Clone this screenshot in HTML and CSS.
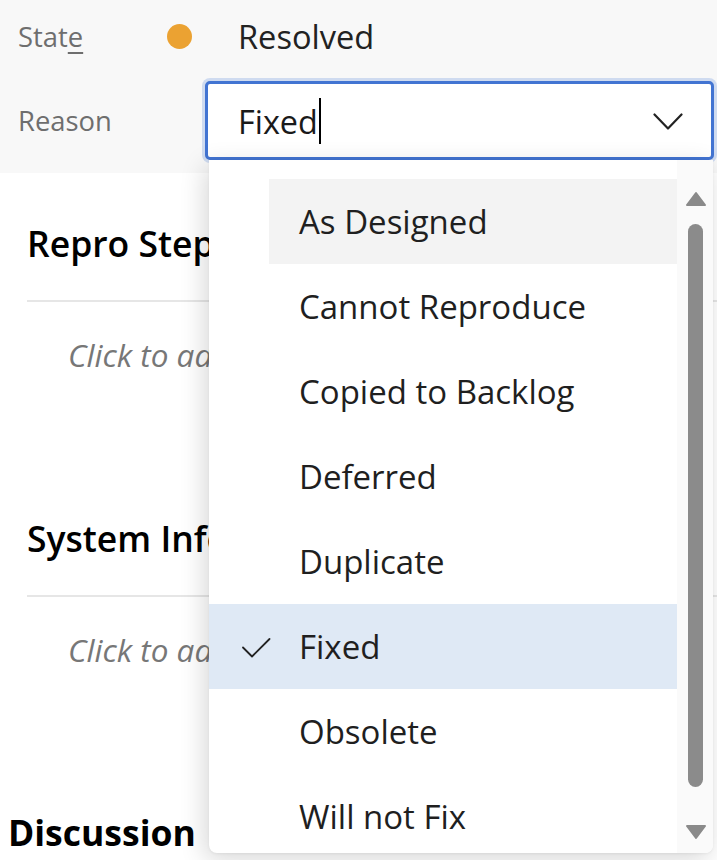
FILE: index.html
```html
<!DOCTYPE html>
<html>
<head>
<meta charset="utf-8">
<link rel="stylesheet" href="styles.css">
</head>
<body>
<div class="fields">
  <div class="row row-state">
    <span class="label label-short">Stat<u>e</u></span>
    <span class="dot"></span>
    <span class="value">Resolved</span>
  </div>
  <div class="row row-reason">
    <span class="label">Reason</span>
    <div class="combo">
      <span class="combo-text">Fixed</span><span class="caret"></span>
      <svg class="chevron" width="30" height="18" viewBox="0 0 30 18"><path d="M1.5 1.5 L15 15.5 L28.5 1.5" fill="none" stroke="#222" stroke-width="2.2" stroke-linecap="round" stroke-linejoin="round"/></svg>
      <div class="menu">
        <div class="list">
          <div class="item hover"><span class="check"></span><span class="text">As Designed</span></div>
          <div class="item"><span class="check"></span><span class="text">Cannot Reproduce</span></div>
          <div class="item"><span class="check"></span><span class="text">Copied to Backlog</span></div>
          <div class="item"><span class="check"></span><span class="text">Deferred</span></div>
          <div class="item"><span class="check"></span><span class="text">Duplicate</span></div>
          <div class="item selected"><span class="check"><svg width="30" height="20" viewBox="0 0 30 20"><path d="M2 9.5 L11 18.5 L28.5 1" fill="none" stroke="#222" stroke-width="1.8" stroke-linecap="round" stroke-linejoin="round"/></svg></span><span class="text">Fixed</span></div>
          <div class="item"><span class="check"></span><span class="text">Obsolete</span></div>
          <div class="item"><span class="check"></span><span class="text">Will not Fix</span></div>
        </div>
        <div class="scroll">
          <svg class="arrow" width="22" height="16" viewBox="0 0 22 16"><path d="M11 2 L20 14 L2 14 Z" fill="#8a8a8a" stroke="#8a8a8a" stroke-width="2" stroke-linejoin="round"/></svg>
          <div class="thumb"></div>
          <svg class="arrow arrow-down" width="22" height="16" viewBox="0 0 22 16"><path d="M2 2 L20 2 L11 14 Z" fill="#8a8a8a" stroke="#8a8a8a" stroke-width="2" stroke-linejoin="round"/></svg>
        </div>
      </div>
    </div>
  </div>
</div>
<div class="content">
  <section class="section">
    <h2 class="heading">Repro Steps</h2>
    <div class="divider"></div>
    <div class="placeholder">Click to add Repro Steps</div>
  </section>
  <section class="section">
    <h2 class="heading">System Info</h2>
    <div class="divider"></div>
    <div class="placeholder">Click to add System Info</div>
  </section>
  <h2 class="discussion">Discussion</h2>
</div>
</body>
</html>
```
FILE: styles.css
```css
html, body {
  margin: 0;
  padding: 0;
}
body {
  width: 717px;
  height: 860px;
  overflow: hidden;
  background: #ffffff;
  font-family: "Open Sans", "Noto Sans", sans-serif;
  color: #222;
}
.fields {
  background: #f8f8f8;
  height: 173px;
  box-sizing: border-box;
}
.row {
  display: flex;
  align-items: center;
  padding-left: 18px;
}
.row-state {
  height: 72px;
}
.row-reason {
  margin-top: 9px;
}
.label {
  width: 187px;
  flex: none;
  font-size: 27.4px;
  color: #6e6e6e;
}
.label-short {
  width: 149px;
}
.label u {
  text-decoration-thickness: 2px;
  text-underline-offset: 5px;
}
.dot {
  width: 25px;
  height: 25px;
  border-radius: 50%;
  background: #eba232;
  margin-right: 46px;
  flex: none;
}
.value {
  font-size: 32.6px;
  color: #222;
}
.combo {
  position: relative;
  width: 509px;
  height: 79px;
  box-sizing: border-box;
  border: 3px solid #4274d2;
  border-radius: 5px;
  box-shadow: 0 0 0 3px #cfdbf0;
  background: #fff;
  display: flex;
  align-items: center;
  padding-left: 30px;
}
.combo-text {
  font-size: 32.4px;
  color: #1a1a1a;
}
.caret {
  width: 2px;
  height: 46px;
  background: #000;
  margin-left: 1px;
}
.chevron {
  margin-left: auto;
  margin-right: 28px;
  margin-top: 2px;
}
.menu {
  position: absolute;
  left: 1px;
  top: 76px;
  width: 504px;
  height: 693px;
  background: #fff;
  border-radius: 0 0 8px 8px;
  box-shadow: -4px 6px 26px rgba(0, 0, 0, 0.16), 0 1px 3px rgba(0, 0, 0, 0.05);
  display: flex;
  overflow: hidden;
  z-index: 10;
}
.list {
  flex: 1;
  padding-top: 19px;
}
.item {
  height: 85px;
  display: flex;
  align-items: stretch;
  font-size: 33px;
  color: #1f1f1f;
}
.check {
  width: 60px;
  flex: none;
  display: flex;
  align-items: center;
  justify-content: flex-end;
}
.check svg {
  margin-right: -2px;
  margin-top: 2px;
}
.text {
  flex: 1;
  display: flex;
  align-items: center;
  padding-left: 30px;
}
.item.hover .text {
  background: #f3f3f3;
}
.item.selected {
  background: #dfe9f5;
}
.scroll {
  width: 36px;
  flex: none;
  background: #fafafa;
  display: flex;
  flex-direction: column;
  align-items: center;
  padding-top: 31px;
  box-sizing: border-box;
}
.arrow {
  flex: none;
  margin-left: 1px;
}
.thumb {
  width: 15px;
  height: 563px;
  border-radius: 8px;
  background: #8b8b8b;
  margin-top: 17px;
  flex: none;
}
.arrow-down {
  margin-top: 37px;
}
.content {
  padding-top: 42px;
}
.section {
  padding-left: 27px;
}
.heading {
  margin: 0;
  height: 56px;
  line-height: 56px;
  font-size: 35.5px;
  font-weight: 600;
  color: #000;
  white-space: nowrap;
  width: 182px;
  overflow: hidden;
}
.divider {
  height: 2px;
  background: #e6e6e6;
  margin-top: 29px;
}
.placeholder {
  margin-top: 28px;
  height: 50px;
  line-height: 50px;
  margin-left: 41px;
  width: 141px;
  overflow: hidden;
  font-size: 31.5px;
  font-style: italic;
  color: #777;
  white-space: nowrap;
  margin-bottom: 130px;
}
.discussion {
  margin: -1px 0 0 8px;
  height: 56px;
  line-height: 56px;
  font-size: 35.5px;
  font-weight: 700;
  color: #000;
}
```
